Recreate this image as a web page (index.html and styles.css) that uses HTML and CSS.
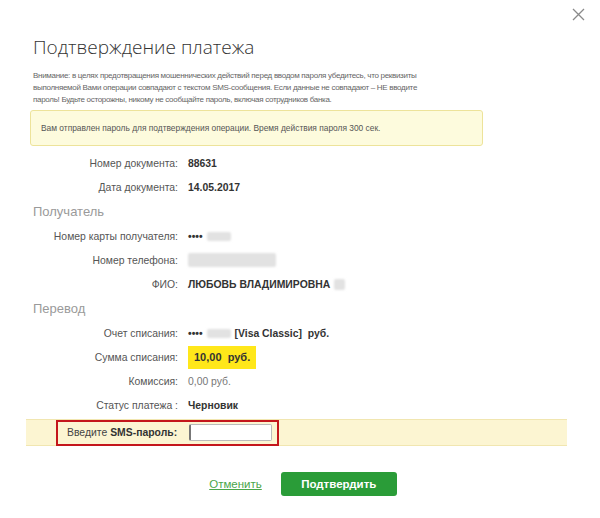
FILE: index.html
```html
<!DOCTYPE html>
<html lang="ru">
<head>
  <meta charset="UTF-8" />
  <meta name="viewport" content="width=device-width, initial-scale=1.0" />
  <title>Подтверждение платежа</title>
  <link rel="stylesheet" href="styles.css">
</head>
<body>
  <div class="modal">
    <button class="close" aria-label="Закрыть">
      <svg width="13" height="13" viewBox="0 0 13 13"><path d="M1 1 L12 12 M12 1 L1 12" stroke="#8a8a8a" stroke-width="1.3" fill="none"/></svg>
    </button>

    <h1>Подтверждение платежа</h1>
    <p class="warning">
      Внимание: в целях предотвращения мошеннических действий перед вводом пароля убедитесь, что реквизиты
      выполняемой Вами операции совпадают с текстом SMS-сообщения. Если данные не совпадают – НЕ вводите
      пароль! Будьте осторожны, никому не сообщайте пароль, включая сотрудников банка.
    </p>
    <div class="notice">Вам отправлен пароль для подтверждения операции. Время действия пароля 300 сек.</div>

    <div class="row"><span class="label">Номер документа:</span><span class="value">88631</span></div>
    <div class="row"><span class="label">Дата документа:</span><span class="value">14.05.2017</span></div>

    <h2>Получатель</h2>
    <div class="row"><span class="label">Номер карты получателя:</span><span class="value">••••<i class="blur card"></i></span></div>
    <div class="row"><span class="label">Номер телефона:</span><span class="value"><i class="blur phone"></i></span></div>
    <div class="row"><span class="label">ФИО:</span><span class="value">ЛЮБОВЬ ВЛАДИМИРОВНА<i class="blur initial"></i></span></div>

    <h2>Перевод</h2>
    <div class="row"><span class="label">Очет списания:</span><span class="value">••••<i class="blur card"></i>[Visa Classic]&nbsp; руб.</span></div>
    <div class="row"><span class="label">Сумма списания:</span><span class="value"><span class="amount">10,00&nbsp; руб.</span></span></div>
    <div class="row"><span class="label">Комиссия:</span><span class="value plain">0,00 руб.</span></div>
    <div class="row"><span class="label">Статус платежа :</span><span class="value">Черновик</span></div>

    <div class="sms-band">
      <label class="sms-box">Введите <b>SMS-пароль:</b> <input type="text" class="sms-input"></label>
    </div>

    <div class="actions">
      <a href="#" class="cancel">Отменить</a>
      <button class="confirm">Подтвердить</button>
    </div>
  </div>
</body>
</html>
```

FILE: styles.css
```css
body {
  margin: 0;
  background: #fff;
  font-family: 'Liberation Sans', Arial, sans-serif;
  color: #333;
}
.modal {
  position: relative;
  width: 600px;
  height: 518px;
  padding: 34px 0 0 33px;
  box-sizing: border-box;
}
.close {
  position: absolute;
  top: 8px;
  right: 15px;
  background: none;
  border: none;
  padding: 0;
  cursor: pointer;
}
h1 {
  margin: 0;
  font-family: 'Open Sans', sans-serif;
  font-weight: 300;
  font-size: 19px;
  line-height: 26px;
  color: #333;
}
.warning {
  width: 390px;
  margin: 10px 0 0;
  font-size: 8px;
  letter-spacing: -0.3px;
  line-height: 12px;
  color: #666;
}
.notice {
  width: 441px;
  margin: 4px 0 0 -3px;
  padding: 11px 0 11px 10px;
  background: #fdfbdd;
  border: 1px solid #ede39a;
  border-radius: 3px;
  font-size: 8.4px;
  line-height: 12px;
  color: #555;
}
.row {
  display: flex;
  align-items: center;
  height: 24px;
  font-size: 10.4px;
}
.notice + .row { margin-top: 5px; }
.label {
  width: 145px;
  text-align: right;
  color: #555;
}
.value {
  margin-left: 10px;
  display: flex;
  align-items: center;
  font-weight: bold;
  color: #333;
}
.value.plain {
  font-weight: normal;
  color: #777;
}
.blur {
  display: inline-block;
  height: 9px;
  background: #e2e2e2;
  border-radius: 2px;
  filter: blur(1px);
}
.blur.card { width: 24px; margin: 0 4px 0 4px; }
.blur.phone { width: 88px; height: 14px; }
.blur.initial { width: 11px; height: 11px; margin-left: 4px; }
.amount {
  display: inline-block;
  height: 23px;
  line-height: 23px;
  padding: 0 6px 0 6px;
  background: #ffe71a;
  font-size: 11px;
  color: #333;
}
h2 {
  margin: 0;
  height: 25px;
  line-height: 25px;
  font-weight: normal;
  font-size: 13px;
  color: #9a9a9a;
}
.sms-band {
  margin: 2px 0 0 -7px;
  width: 541px;
  height: 25px;
  background: #fcf5d2;
  border-top: 1px solid #f1e6b0;
  border-bottom: 1px solid #f1e6b0;
  display: flex;
  align-items: center;
}
.sms-box {
  margin-left: 30px;
  width: 210px;
  height: 22px;
  border: 2px solid #c4161c;
  display: flex;
  align-items: center;
  padding-left: 9px;
  font-size: 10.4px;
  color: #444;
}
.sms-box b {
  margin-left: 3px;
  color: #333;
}
.sms-input {
  margin-left: 12px;
  width: 83px;
  height: 17px;
  padding: 0 3px;
  box-sizing: border-box;
  border: 1px solid #bbb;
  border-left: 2px solid #777;
  border-radius: 2px;
  background: #fff;
}
.actions {
  display: flex;
  align-items: center;
  justify-content: center;
  gap: 19px;
  margin: 26px 0 0 -33px;
  padding-left: 6px;
}
.cancel {
  color: #4aa64a;
  font-size: 11.5px;
}
.confirm {
  width: 116px;
  height: 24px;
  background: #2a9c38;
  border: none;
  border-radius: 3px;
  color: #fff;
  font-family: 'Liberation Sans', Arial, sans-serif;
  font-weight: bold;
  font-size: 11.5px;
  cursor: pointer;
}
```
